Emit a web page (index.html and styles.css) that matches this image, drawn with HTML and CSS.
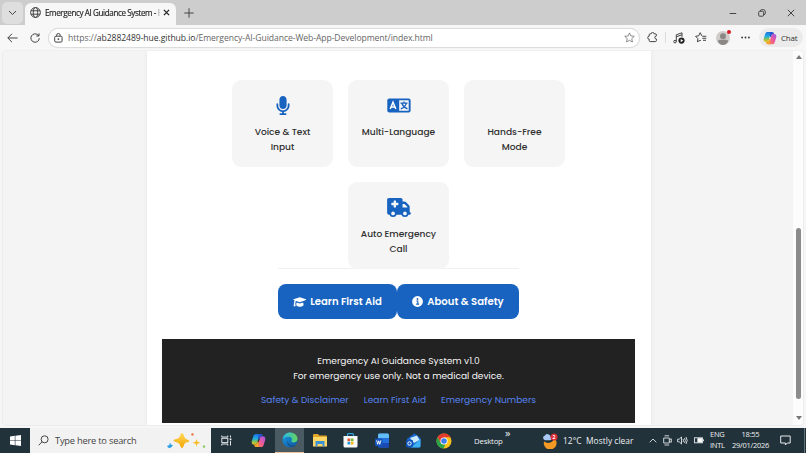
FILE: index.html
```html
<!DOCTYPE html>
<html lang="en">
<head>
<meta charset="utf-8">
<title>Emergency AI Guidance System</title>
<link rel="stylesheet" href="styles.css">
</head>
<body>
<svg class="defs" width="0" height="0">
  <defs>
    <linearGradient id="cpA" x1="0" y1="0" x2="0" y2="1"><stop offset="0" stop-color="#1b6fe0"/><stop offset=".45" stop-color="#20aee0"/><stop offset=".7" stop-color="#7cc35a"/><stop offset="1" stop-color="#f5c21b"/></linearGradient>
    <linearGradient id="cpB" x1="1" y1="0" x2="0" y2="1"><stop offset="0" stop-color="#9a55ee"/><stop offset=".5" stop-color="#ee5a9a"/><stop offset="1" stop-color="#fb8a3c"/></linearGradient>
    <linearGradient id="edA" x1="0" y1="0" x2="1" y2="0"><stop offset="0" stop-color="#2cb8ea"/><stop offset="1" stop-color="#62d65a"/></linearGradient>
    <linearGradient id="edB" x1="0" y1="0" x2="1" y2="1"><stop offset="0" stop-color="#1b9de2"/><stop offset="1" stop-color="#0c52a0"/></linearGradient>
    <linearGradient id="gold" x1="0" y1="0" x2="0" y2="1"><stop offset="0" stop-color="#ffd95a"/><stop offset="1" stop-color="#f5a500"/></linearGradient>
    <symbol id="copilot" viewBox="0 0 16 16">
      <path fill="url(#cpA)" d="M5 1h5.500C9 1.400 8.600 3 8.100 5L6.500 10.500C6 12.300 5 12.500 3.500 12.500 1.200 12.500.3 11 .9 8.500L2.300 4C2.800 2 3.400 1 5 1z"/>
      <path fill="url(#cpB)" d="M11 15H5.500C7 14.600 7.400 13 7.900 11L9.500 5.500C10 3.700 11 3.500 12.500 3.500c2.300 0 3.200 1.500 2.600 4L13.700 12c-.5 2-1.100 3-2.700 3z"/>
      <path fill="#2356cf" d="M8 1h2.500c1.300 0 1.800.8 2.200 2.500C10.800 3.400 9.900 4 9.400 5.500L8.800 7.500 7.800 6z"/>
      <path fill="#f6a52c" d="M8 15H5.500c-1.300 0-1.800-.8-2.200-2.500 1.900.1 2.800-.5 3.300-2L7.200 8.500 8.200 10z"/>
    </symbol>
  </defs>
</svg>

<header class="tabstrip">
  <div class="tab-menu"><svg width="9" height="6" viewBox="0 0 9 6"><path class="ln" d="M1 1l3.500 3.500L8 1"/></svg></div>
  <div class="tab">
    <svg width="11" height="11" viewBox="0 0 11 11"><g class="ln"><circle cx="5.500" cy="5.500" r="4.900"/><ellipse cx="5.500" cy="5.500" rx="2.200" ry="4.900"/><path d="M1 3.800h9M1 7.200h9"/></g></svg>
    <span class="tab-title">Emergency AI Guidance System - H</span>
    <svg width="7" height="7" viewBox="0 0 7 7"><path class="ln bold" d="M.9.900l5.200 5.200M6.100.9L.9 6.100"/></svg>
  </div>
  <svg class="plus" width="10" height="10" viewBox="0 0 10 10"><path class="ln" d="M5 .3v9.400M.3 5h9.400"/></svg>
  <div class="win">
    <svg width="8" height="8" viewBox="0 0 8 8"><path class="ln" d="M.7 4.500h6.500"/></svg>
    <svg width="8" height="8" viewBox="0 0 8 8"><g class="ln"><rect x=".7" y="2.300" width="4.900" height="4.900" rx="1"/><path d="M2.300 1.900Q2.400.7 3.700.7h1.600q2 0 2 2v1.600q0 1.300-1.400 1.400"/></g></svg>
    <svg width="8" height="8" viewBox="0 0 8 8"><path class="ln" d="M.8.800l6.400 6.400M7.200.800L.8 7.200"/></svg>
  </div>
</header>

<nav class="toolbar">
  <svg class="back" width="11" height="10" viewBox="0 0 11 10"><path class="ln" d="M10.600 5H.8M5 .8L.8 5 5 9.200"/></svg>
  <svg class="reload" width="10" height="10" viewBox="0 0 10 10"><path class="ln" d="M9.300 5.200A4.200 4.200 0 1 1 8 2L9 3M9 .3V3H6.300"/></svg>
  <div class="address">
    <svg width="9" height="10" viewBox="0 0 9 10"><g class="ln"><rect x=".7" y="3.200" width="7.400" height="5.900" rx="1.200"/><path d="M2.600 3.200V2.300a1.800 1.800 0 0 1 3.600 0v.9"/></g><circle cx="4.400" cy="6.100" r=".9" fill="#444"/></svg>
    <span class="url">https://<b>ab2882489-hue.github.io</b>/Emergency-AI-Guidance-Web-App-Development/index.html</span>
    <svg class="star" width="11" height="11" viewBox="0 0 12 12"><path class="ln soft" d="M6 1l1.500 3.300 3.700.4-2.700 2.500.7 3.700L6 9.100 2.800 10.900l.7-3.700L.8 4.700l3.700-.4z"/></svg>
  </div>
  <svg class="ext" width="11" height="11" viewBox="0 0 11 11"><path class="ln" d="M3.200 1.800h1a1.400 1.400 0 0 1 2.800 0h1.400q1 0 1 1v1.100a1.500 1.500 0 0 0 0 3.100v1.600q0 1-1 1H3.200q-1 0-1-1V7.200a1.500 1.500 0 0 1 0-3V2.800q0-1 1-1z"/></svg>
  <i class="sep"></i>
  <svg class="music" width="12" height="12" viewBox="0 0 12 12"><g class="ln"><path d="M3.300 9.600V2.800L9 .8v4M3.300 4.800L9 2.800"/><circle cx="2" cy="9.600" r="1.300"/></g><circle cx="8.500" cy="8.600" r="3.100" fill="#222"/><path d="M7.700 7v3.200l2.500-1.600z" fill="#fff"/></svg>
  <svg class="favs" width="12" height="11" viewBox="0 0 12 11"><path class="ln" d="M6.900 3.900L5.200.7 3.700 3.800.6 4.300l2.300 2.300-.5 3.200 2.800-1.500.8.5M7.300 4.300h4M7.300 6.300h4M8 8.300h3"/></svg>
  <div class="avatar"><svg width="14" height="14" viewBox="0 0 14 14"><circle cx="7" cy="7" r="7" fill="#cfccca"/><circle cx="7" cy="5.300" r="3" fill="#8b8784"/><path d="M2 10.200q0-1.500 1.500-1.500h7q1.500 0 1.500 1.500Q10.500 14 7 14T2 10.200z" fill="#8b8784"/></svg><i class="dot"></i></div>
  <svg class="dots" width="9" height="3" viewBox="0 0 9 3"><g fill="#333"><circle cx="1.100" cy="1.500" r=".9"/><circle cx="4.500" cy="1.500" r=".9"/><circle cx="7.900" cy="1.500" r=".9"/></g></svg>
  <div class="chat"><svg width="14" height="14"><use href="#copilot"/></svg><span>Chat</span></div>
</nav>

<div class="viewport">
  <main class="sheet">
    <section class="features">
      <div class="card">
        <svg class="blue" width="14" height="19" viewBox="12 0 360 512"><path d="M192 0C139 0 96 43 96 96V256c0 53 43 96 96 96s96-43 96-96V96c0-53-43-96-96-96zM64 216c0-13.300-10.700-24-24-24s-24 10.700-24 24v40c0 89.100 66.200 162.700 152 174.400V464H120c-13.300 0-24 10.700-24 24s10.700 24 24 24h144c13.300 0 24-10.700 24-24s-10.700-24-24-24H216V430.400c85.800-11.700 152-85.300 152-174.400V216c0-13.300-10.700-24-24-24s-24 10.700-24 24v40c0 70.700-57.300 128-128 128s-128-57.300-128-128V216z"/></svg>
        <p>Voice &amp; Text<br>Input</p>
      </div>
      <div class="card">
        <svg class="blue" width="24" height="19" viewBox="0 0 24 19"><rect x=".3" y="2.400" width="23.300" height="14.200" rx="2"/><path d="M12.200 4.300h9.500v10.400h-9.500z" fill="#f5f5f5"/><path d="M3.200 13L6 6.200 8.800 13M4.300 10.900h3.400" fill="none" stroke="#fff" stroke-width="1.500"/><path d="M13.500 7.200h7M17 5.400v1.800M19.300 7.400Q18 11.400 13.800 12.900M14.900 7.600Q16.500 11.500 20.500 12.900" fill="none" stroke="#1763bf" stroke-width="1.300"/></svg>
        <p>Multi-Language</p>
      </div>
      <div class="card">
        <i class="no-icon"></i>
        <p>Hands-Free<br>Mode</p>
      </div>
      <div class="card">
        <svg class="blue" width="24" height="19" viewBox="0 0 640 512"><path fill-rule="evenodd" d="M0 48C0 21.500 21.500 0 48 0H368c26.500 0 48 21.500 48 48V96h50.700c17 0 33.300 6.700 45.300 18.700L589.300 192c12 12 18.700 28.300 18.700 45.300V384c17.700 0 32 14.300 32 32s-14.300 32-32 32H48c-26.500 0-48-21.500-48-48zM416 256H544V237.300L466.700 160H416zM176 80v48h-48q-16 0-16 16v32q0 16 16 16h48v48q0 16 16 16h32q16 0 16-16v-48h48q16 0 16-16v-32q0-16-16-16h-48V80q0-16-16-16h-32q-16 0-16 16z"/><circle cx="160" cy="416" r="96"/><circle cx="480" cy="416" r="96"/><g fill="#f5f5f5"><circle cx="160" cy="416" r="50"/><circle cx="480" cy="416" r="50"/></g></svg>
        <p>Auto Emergency<br>Call</p>
      </div>
    </section>
    <section class="actions">
      <a class="btn learn"><svg width="13" height="10" viewBox="0 0 13 10"><path fill="#fff" d="M6.800.2L13 2.300v.8L6.800 5.300 3.200 4.100Q2.400 4.500 2.300 6L2.600 9.200H.5L1 6Q1 4.400 1.800 3.600L.4 3.100v-.8zM3.500 5.500l3.300 1.100L10.200 5.500l.4 2.700Q9 9.700 6.900 9.700T3.200 8.200z"/></svg><span>Learn First Aid</span></a>
      <a class="btn about"><svg width="11" height="11" viewBox="0 0 11 11"><circle cx="5.500" cy="5.500" r="5.400" fill="#fff"/><circle cx="5.500" cy="3" r=".9" fill="#1763bf"/><path d="M4.300 5h1.500v3M4.100 8.100h3" fill="none" stroke="#1763bf" stroke-width="1.100"/></svg><span>About &amp; Safety</span></a>
    </section>
    <footer class="foot">
      <p>Emergency AI Guidance System v1.0<br>For emergency use only. Not a medical device.</p>
      <div class="links"><a>Safety &amp; Disclaimer</a><a>Learn First Aid</a><a>Emergency Numbers</a></div>
    </footer>
  </main>
  <aside class="scroll"><i class="up"></i><i class="thumb"></i><i class="down"></i></aside>
</div>

<div class="taskbar">
  <div class="cell start"><svg width="11" height="11" viewBox="0 0 11 11"><path fill="#fff" d="M0 1.500L4.800.8v4.400H0zM5.400.7L11 0v5.200H5.400zM0 5.800h4.800v4.400L0 9.500zM5.400 5.800H11V11l-5.600-.8z"/></svg></div>
  <div class="search">
    <svg width="11" height="11" viewBox="0 0 11 11"><g class="ln"><circle cx="6.600" cy="4.300" r="3.500"/><path d="M4 6.900L.6 10.300"/></g></svg>
    <span>Type here to search</span>
    <svg class="spark" width="40" height="18" viewBox="0 0 40 18"><path fill="url(#gold)" d="M16 1Q17.500 1 18 4q.7 3 4 3.700 2 .5 1 1.700-1 .7-3 1.100Q18.200 11 17.600 14q-.6 2-1.600 2t-1.600-2q-.6-3-3-3.500-4-.9-4-2t3-1.400Q13.500 6.500 14 4q.5-3 2-3z"/><path fill="#f9bd25" d="M30.500 7l1 2.800 3 1-3 1-1 2.800-1-2.800-3-1 3-1z"/><path fill="#2a9fe8" d="M4 10.500l.8 2 2.100.8-1 1.500-2.400 1.500-1.800-1-.5-1.500 2-.6z"/><circle cx="26.500" cy="2.400" r="1.200" fill="#ec7041"/><circle cx="38" cy="14.600" r="1.300" fill="#93cd6e"/></svg>
  </div>
  <div class="cell task"><svg width="11" height="11" viewBox="0 0 11 11"><g fill="none" stroke="#dfe5e8" stroke-width="1"><path d="M.8.500v1.500h6V.5M.8 10.500V9h6v1.500M9.500.5v2M9.500 6v4.500"/><rect x=".8" y="3.300" width="6" height="4.300"/></g><path fill="#fff" d="M8.700 3.500h1.700v1.700H8.700z"/></svg></div>
  <div class="cell cop"><svg width="15" height="15"><use href="#copilot"/></svg></div>
  <div class="cell edge"><svg width="16" height="16" viewBox="0 0 16 16"><circle cx="8" cy="8" r="7.500" fill="url(#edB)"/><path fill="url(#edA)" d="M.6 7.200C1.500 2.800 4.300.5 8 .5c4.600 0 7.500 3.400 7.500 6.200 0 2.300-1.700 3.800-4 3.800-1.900 0-2.700-.8-1.900-1.900.9-1.300.2-3.900-2.800-3.900C4 4.700 1.600 5.500.6 7.200z"/><path fill="#17548f" d="M5.600 7.500C4.800 11 8 14.200 13.500 12.900 10 17.500 3.500 13.500 5.600 7.500z"/></svg></div>
  <div class="cell"><svg width="14" height="13" viewBox="0 0 14 13"><path fill="#e2a52a" d="M0 1Q0 0 1 0h4l1.300 1.500H13q1 0 1 1V12H0z"/><path fill="#ffd767" d="M0 3h14v9.500H0z"/><path fill="#3b91d6" d="M2.500 7h9v5.600h-2V10h-5v2.600h-2z"/></svg></div>
  <div class="cell"><svg width="15" height="15" viewBox="0 0 15 15"><path d="M4.500 3.500V1.600q0-1 1-1h4q1 0 1 1v1.900" fill="none" stroke="#2ca3dd" stroke-width="1.200"/><path fill="#f7f9fb" d="M.5 3h14v10q0 1.500-1.500 1.500H2Q.5 14.500.5 13z"/><path fill="#e5522c" d="M4.500 5.500h2.700v2.700H4.500z"/><path fill="#7ab92d" d="M7.800 5.500h2.700v2.700H7.800z"/><path fill="#1b9cdf" d="M4.500 8.800h2.700v2.700H4.500z"/><path fill="#f8b91b" d="M7.800 8.800h2.700v2.700H7.800z"/></svg></div>
  <div class="cell"><svg width="14" height="15" viewBox="0 0 14 15"><rect x="3" y=".5" width="11" height="14" rx="1.500" fill="#2370dc"/><path fill="#63bdf6" d="M4.500.5h8q1.500 0 1.500 1.500v3H3V2Q3 .5 4.500.5z"/><path fill="#1b49b4" d="M3 10h11v3q0 1.500-1.500 1.500h-8Q3 14.500 3 13z"/><rect y="5.500" width="7.500" height="7.500" rx="1" fill="#1554bc"/><path d="M1.600 7.300l1.100 4 1-3.500 1.100 3.500 1.100-4" fill="none" stroke="#fff" stroke-width=".9"/></svg></div>
  <div class="cell out"><svg width="15" height="15" viewBox="0 0 15 15"><path fill="#1868cf" d="M1 6L8 .8q.5-.4 1 0L14.500 5v8q0 1.500-1.500 1.500H3Q1 14.500 1 13z"/><path fill="#c9eafd" d="M4 5l7-2.500L13.500 7 8 10z"/><path fill="#3fb2f3" d="M14.500 6v7q0 1.500-1.500 1.500H5z"/><rect y="7" width="7" height="7" rx="1" fill="#0f55bb"/><circle cx="3.500" cy="10.500" r="1.700" fill="none" stroke="#fff" stroke-width="1"/></svg></div>
  <div class="cell chrome"><svg width="16" height="16" viewBox="0 0 16 16"><circle cx="8" cy="8" r="7.500" fill="#fbc116"/><path fill="#e33b2e" d="M1.500 4.250A7.500 7.500 0 0 1 14.500 4.250H8L4.800 9.900z"/><path fill="#29a34a" d="M1.500 4.250L4.800 9.900Q6 11.600 8 11.600h1.500L7.300 15.500A7.500 7.500 0 0 1 1.500 4.250z"/><circle cx="8" cy="8" r="3.600" fill="#fff"/><circle cx="8" cy="8" r="2.800" fill="#3c7fec"/></svg></div>
  <span class="desk">Desktop</span><span class="more">»</span>
  <svg class="weather" width="16" height="16" viewBox="0 0 16 16"><path fill="#f49a24" d="M13.500 6.500A6.400 6.400 0 1 1 2 8.500q3.500 2.500 7 .8 2.500-1.500 3-4z"/><path fill="#a9caf5" d="M3 7.200a2.400 2.400 0 0 1 0-4.700Q4.500.3 6.800 1.500q1.500.7 1.500 2 1.500.3 1.500 1.800 0 1.900-2 1.900z"/><circle cx="12" cy="4" r="3.500" fill="#d92d32"/><text x="12" y="6" text-anchor="middle" class="badge">2</text></svg>
  <span class="temp">12°C&nbsp; Mostly clear</span>
  <div class="tray">
    <svg width="8" height="5" viewBox="0 0 8 5"><path d="M.7 4.300L4 1l3.300 3.300"/></svg>
    <svg width="9" height="11" viewBox="0 0 9 11"><path d="M1.500.8h4.600M1.500 10h4.600M.7 3h5.600v5H.7zM6.500 4.800l1.800-1v3.500l-1.800-1"/></svg>
    <svg width="11" height="9" viewBox="0 0 11 9"><path d="M.6 3.200h1.600L4.500 1v7L2.200 5.800H.6zM6 3q1 1.500 0 3M7.500 2q1.700 2.500 0 5M9 1q2.400 3.500 0 7"/></svg>
    <svg width="10" height="7" viewBox="0 0 10 7"><rect x=".5" y=".8" width="8" height="5"/><path d="M9.500 2.400v1.800"/><path class="fill" d="M3.800 1.500H8v3.700H3.800z"/></svg>
  </div>
  <div class="lang"><span>ENG</span><span>INTL</span></div>
  <div class="clock"><span>18:55</span><span>29/01/2026</span></div>
  <svg class="note" width="11" height="11" viewBox="0 0 11 11"><path d="M.7 1h9.500v7H7.300L5.400 10V8H.7z" fill="none" stroke="#e4e8ea"/></svg>
  <i class="peek"></i>
</div>
</body>
</html>
```
FILE: styles.css
```css
* { box-sizing: border-box; }
body { margin: 0; width: 806px; height: 453px; overflow: hidden; display: flex; flex-direction: column; background: #f6f6f6; font-family: "Open Sans", "Noto Sans", sans-serif; color: #333; }
svg { display: block; flex: none; }
.defs { position: absolute; }
span, a { white-space: nowrap; }
.ln { fill: none; stroke: #444; stroke-width: 1; }
.bold { stroke-width: 1.3; stroke: #222; }
.soft { stroke: #777; stroke-width: .9; }

.tabstrip { height: 25px; flex: none; background: #cdcdcd; display: flex; align-items: center; }
.tab-menu { width: 21px; height: 22px; margin-left: 2px; border-radius: 5px; background: #dedede; display: flex; align-items: center; justify-content: center; }
.tab { width: 151px; height: 22px; margin: 3px 0 0 2px; padding: 0 0 3px 5px; border-radius: 6px 6px 0 0; background: #f7f7f7; display: flex; align-items: center; }
.tab-title { width: 115px; margin: 0 3px 0 4px; overflow: hidden; font-size: 8.100px; letter-spacing: -.4px; color: #222; -webkit-text-stroke: .15px #222; mask-image: linear-gradient(90deg, #000 110px, transparent 116px); }
.plus { margin-left: 8px; }
.win { margin-left: auto; margin-right: 11px; display: flex; gap: 21px; }

.toolbar { height: 25px; flex: none; background: #f7f7f7; display: flex; align-items: center; }
.back { margin-left: 7px; }
.reload { margin: 0 8px 0 12px; }
.address { width: 592px; height: 20px; padding: 0 4px 0 5px; border: 1px solid #dcdcdc; border-radius: 10px; background: #fff; display: flex; align-items: center; box-shadow: 0 0 1px #ddd; }
.url { flex: 1; margin-left: 5px; font-size: 8.600px; letter-spacing: -.065px; color: #666; }
.url b { font-weight: 400; color: #333; }
.ext { margin-left: 7px; }
.sep { width: 1px; height: 11px; margin-left: 7px; background: #ddd; }
.music { margin-left: 7px; }
.favs { margin-left: 10px; }
.avatar { position: relative; margin-left: 9px; }
.dot { position: absolute; right: -1px; top: -1px; width: 4px; height: 4px; border-radius: 50%; background: #d71926; }
.dots { margin-left: 11px; }
.chat { width: 44px; height: 19px; margin-left: 9px; padding-left: 4px; border-radius: 10px; background: #ebebeb; display: flex; align-items: center; gap: 4px; font-size: 8px; letter-spacing: -.25px; }

.viewport { height: 376px; margin: 0 2px 2px; flex: none; display: flex; border: 1px solid #ececec; border-top-color: #f0f0f0; border-radius: 5px; background: #f4f4f4; overflow: hidden; }
.sheet { width: 504px; margin-left: 144px; padding: 28.500px 15px 0; background: #fff; box-shadow: 0 0 4px #e4e4e4; font-family: Poppins, Inter, sans-serif; }
.features { width: 341px; margin: 0 0 0 66px; display: flex; flex-wrap: wrap; justify-content: center; gap: 15.500px 15px; }
.card { width: 101px; height: 87px; padding-top: 16px; border-radius: 9px; background: #f5f5f5; display: flex; flex-direction: column; align-items: center; }
.card p { margin: 10.400px 0 0; font-size: 9.070px; line-height: 14.900px; font-weight: 500; text-align: center; color: #303030; }
.blue { fill: #1763bf; }
.no-icon { height: 19px; }
.actions { width: 241px; margin: -1px 0 0 116px; padding-top: 15px; border-top: 1px solid #f0f0f0; display: flex; }
.btn { height: 35px; border-radius: 8px; background: #1763bf; color: #fff; display: flex; align-items: center; justify-content: center; font-size: 10.080px; font-weight: 600; gap: 4px; }
.learn { width: 119px; }
.about { width: 122px; }
.foot { height: 84px; width: 473px; margin-top: 19.500px; padding-top: 15.300px; background: #222; color: #f5f5f5; text-align: center; font-size: 9.070px; line-height: 14.700px; }
.foot p { margin: 0; }
.links { margin-top: 9.500px; display: flex; justify-content: center; gap: 15px; color: #5583ee; }
.scroll { width: 10px; margin-left: auto; padding: 4px 0 5px 1px; background: #fcfcfc; display: flex; flex-direction: column; align-items: center; }
.up { border: 3px solid transparent; border-top: 0; border-bottom: 4px solid #777; }
.thumb { width: 5px; height: 172px; margin-top: 169px; border-radius: 3px; background: #8b8b8b; }
.down { margin-top: 17px; border: 3px solid transparent; border-bottom: 0; border-top: 4px solid #777; }

.taskbar { height: 25px; flex: none; background: #22323b; display: flex; align-items: center; color: #eef1f2; font-size: 8px; }
.cell { width: 31px; height: 25px; display: flex; align-items: center; justify-content: center; flex: none; }
.start { width: 30px; }
.search { width: 181px; height: 25px; padding-left: 8px; background: #f2f2f2; display: flex; align-items: center; flex: none; color: #444; font-size: 9.300px; letter-spacing: -.22px; }
.search span { width: 111px; margin-left: 6px; }
.task { width: 31px; }
.cop { width: 33px; }
.edge { width: 29px; background: #4a5a63; border-bottom: 1px solid #efc39b; }
.out { width: 32px; }
.chrome { width: 30px; }
.desk { width: 31px; margin-left: 15px; font-size: 7.800px; letter-spacing: -.2px; }
.more { font-size: 11px; line-height: 11px; margin-top: -17px; width: 8px; }
.weather { margin-left: 29px; }
.badge { font: 700 5px "Open Sans", sans-serif; fill: #fff; }
.temp { width: 72px; margin-left: 5px; font-size: 8.400px; letter-spacing: .04px; }
.tray { margin-left: 14px; display: flex; align-items: center; gap: 5.500px; }
.tray svg { fill: none; stroke: #e1e6e8; stroke-width: .9; }
.tray .fill { fill: #fff; }
.lang, .clock { display: flex; flex-direction: column; line-height: 11px; font-size: 7.500px; letter-spacing: -.26px; margin-top: -1px; }
.lang { width: 16px; margin-left: 6.500px; }
.clock { width: 37px; margin-left: 6px; align-items: center; }
.note { margin-left: 11px; }
.peek { width: 1px; height: 25px; margin-left: auto; margin-right: 1px; background: #64717a; }
```
